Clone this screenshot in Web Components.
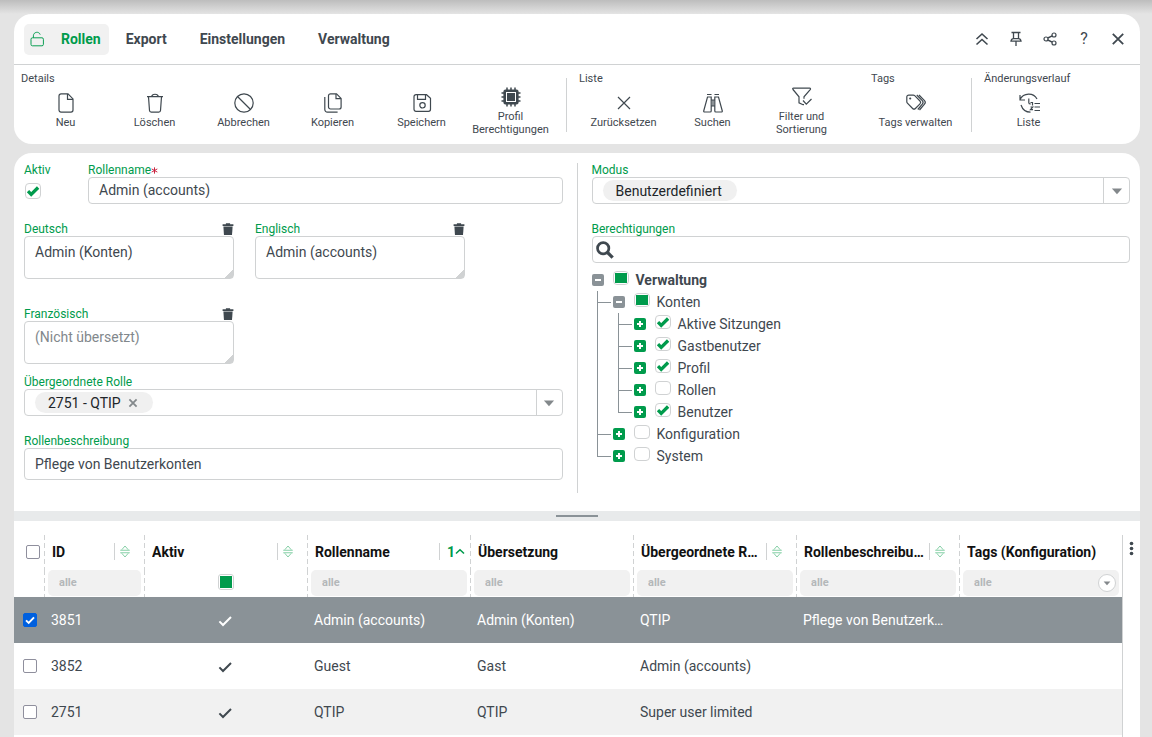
<!DOCTYPE html>
<html lang="de">
<head>
<meta charset="utf-8">
<meta name="viewport" content="width=device-width, initial-scale=1">
<title>Rollen</title>
<style>
html, body { height: 100%; }
body {
  margin: 0;
  overflow: hidden;
  font: 14px/20px Roboto, sans-serif;
  color: #3f484f;
  background: linear-gradient(#bdbdbd, #e4e4e4 14px) #e4e4e4;
  background-repeat: no-repeat;
  --green: #009b4c;
  --line: #d0d2d3;
  --ink: #3f484f;
  --slate: #8a9297;
}
</style>
</head>
<body>
<role-app></role-app>

<script>
const ICONS = {
  unlock: '<rect x="2.500" y="8.500" width="15.500" height="10" rx="1.800"/><path d="M5.500 8.500V6C5.500 1 12.500 0 14 4.500"/>',
  page: '<path d="M5 .9h7l5 5v11.2a2 2 0 0 1-2 2H5a2 2 0 0 1-2-2V2.900a2 2 0 0 1 2-2z"/><path d="M11.500 1v5.300H17"/>',
  trash: '<path d="M2 3.600h16M6.800 3.400C7 .5 13 .5 13.200 3.400M3.500 3.800l1 13.700a1.700 1.700 0 0 0 1.700 1.600h7.600a1.700 1.700 0 0 0 1.700-1.600l1-13.700"/>',
  ban: '<circle cx="10" cy="10" r="9.200"/><path d="M3.500 3.500l13 13"/>',
  copy: '<path d="M7.500 .8h6l4.600 4.600v8.600a2 2 0 0 1-2 2H7.500a2 2 0 0 1-2-2V2.800a2 2 0 0 1 2-2z"/><path d="M13 1v4.700h5M1.800 4v12.500a2.600 2.600 0 0 0 2.600 2.600h10.200"/>',
  save: '<path d="M4 1.700h10.500l4 3.600v11a2 2 0 0 1-2 2H4a2 2 0 0 1-2-2V3.700a2 2 0 0 1 2-2z"/><path d="M5.500 2v4.300h8V2"/><circle cx="10.500" cy="12.300" r="2.700"/>',
  chip: '<path d="M6 .5v19M10 .5v19M14 .5v19M.5 6h19M.5 10h19M.5 14h19" stroke-width="1.500"/><rect x="3" y="3" width="14" height="14" rx="1.500" fill="currentColor"/><rect x="5.500" y="5.500" width="9" height="9" stroke="#fff" stroke-width="1" fill="currentColor"/>',
  cross: '<path d="M4 4l12 12M16 4L4 16"/>',
  search2: '<path d="M4 1.500h4.500M11.500 1.500H16M4.500 4h3.700V18a1 1 0 0 1-1 1H1.500a.8.8 0 0 1-.8-1zM15.500 4h-3.700V18a1 1 0 0 0 1 1h5.700a.8.8 0 0 0 .8-1zM8.300 7h3.400M8.300 13h3.400M10 7v6"/>',
  filter: '<path d="M1 2.500C.4 1.600.6 1.200 1.600 1.200H17.600c1 0 1.200.6.6 1.400L12 9.800v2M1 2.500l6 7.300v6l4 1.900h1"/><path d="M11 13.500l3.300 3.700 5.200-5.200"/>',
  tags: '<path d="M.8 4a1.900 1.900 0 0 1 1.900-1.900h4.600a2 2 0 0 1 1.400.6l5.300 5.300a2 2 0 0 1 0 2.800l-4.600 4.700a2 2 0 0 1-2.800 0L1.400 10.200a2 2 0 0 1-.6-1.400z"/><path d="M10.800 2l5.500 5.700a2.600 2.600 0 0 1 0 3.500L11.800 16.500M13 2l5.500 5.700a2.600 2.600 0 0 1 0 3.500L13.500 17"/><circle cx="4.200" cy="5.500" r=".5"/>',
  history: '<path d="M1 6.500C4.500-.5 14.500-.8 18 6M1 2v5h5M2 12c2 6 5.500 7.200 9.500 7.200M9.800 5.500v4.200c0 1 .8 1.300 2 1.300M11.500 9.500h2v3M11.500 14h2.300l-2.300 2.700h2.500M15.500 10.500H21M15.500 14H21M15.500 17.500H21"/>',
  up2: '<path d="M4.500 10L10 5l5.500 5M4.500 15.500l5.500-5 5.500 5" stroke-width="1.600"/>',
  pin: '<path d="M5.500 3.500h9M7.500 3.500v6.200h5V3.500M5 12.200c.3-1.800 1.300-2.500 2.500-2.500h5c1.200 0 2.200.7 2.500 2.500zM10 12.500V17" stroke-width="1.300"/>',
  share: '<circle cx="6" cy="10" r="2"/><circle cx="14" cy="6" r="2"/><circle cx="14" cy="14" r="2"/><path d="M7.800 9l4.400-2.100M7.800 11l4.400 2.100" stroke-width="1.500"/>',
  close: '<path d="M4.800 4.800l10.400 10.400M15.200 4.800L4.800 15.200" stroke-width="1.800"/>',
  bin: '<path d="M6.500 2.200V.5h7v1.700H19v3H1v-3z" fill="currentColor" stroke="none"/><path d="M2.300 6h15.400l-1 14H3.300z" fill="currentColor" stroke="none"/>',
  star: '<path d="M10 1v18M2 5.500l16 9M18 5.500l-16 9" stroke-width="2.800"/>',
  small: '<path d="M4 4l12 12M16 4L4 16" stroke-width="3"/>',
  down: '<path d="M1.500 6h17L10 15.500z" fill="currentColor" stroke="none"/>',
  lens: '<circle cx="8" cy="8" r="6.300" stroke-width="3"/><path d="M12.500 12.500l6 6" stroke-width="3.600"/>',
  sort: '<path d="M3.500 9.500L10 2l6.500 7.500M.500 10.500h19M.500 15.500h19M3.500 16.500L10 24l6.500-7.500" stroke-width="2"/>',
  asc: '<path d="M2 14L10 6.500l8 7.500" stroke-width="3.200"/>',
  tick: '<path d="M3 10.500l4.500 4.500L17.500 5" stroke-width="2.500"/>',
  dots: '<g fill="currentColor" stroke="none"><circle cx="10" cy="4" r="2.900"/><circle cx="10" cy="12" r="2.900"/><circle cx="10" cy="20" r="2.900"/></g>'
};
const HEIGHTS = { dots: 24, sort: 26 };

const BASE = `
  *, *::before, *::after { box-sizing: border-box; }
  button, input, textarea, select { font: inherit; color: inherit; margin: 0; }
  button { border: 0; padding: 0; background: none; cursor: pointer; }
`;
/* green tick shared by the form and the tree */
const TICK = `
  input[type=checkbox] {
    appearance: none; width: 16px; height: 16px; flex: none;
    border: 1px solid var(--line); border-radius: 4px; background: #fff center/14px 14px no-repeat;
  }
  input[type=checkbox]:checked {
    background-image: url("data:image/svg+xml,%3Csvg xmlns='http://www.w3.org/2000/svg' viewBox='0 0 14 14'%3E%3Cpath d='M2 7.200l3.200 3.200 6.900-6.900' fill='none' stroke='%23009b4c' stroke-width='3.300'/%3E%3C/svg%3E");
  }
  input[type=checkbox].mixed { background: linear-gradient(var(--green), var(--green)) center/12px 10px no-repeat #fff; }
`;

function define(name, css, html) {
  customElements.define(name, class extends HTMLElement {
    connectedCallback() {
      if (this.shadowRoot) return;
      const root = this.attachShadow({ mode: 'open' });
      const a = (k, d = '') => this.getAttribute(k) ?? d;
      root.innerHTML = `<style>${BASE}${css}</style>` + (typeof html === 'function' ? html(a) : html);
    }
  });
}

define('ui-icon', `
  :host { display: inline-flex; width: 20px; height: 20px; flex: none; }
  svg { width: 100%; height: 100%; overflow: visible; fill: none; stroke: currentColor; stroke-width: 1.200; }
`, a => `<svg viewBox="0 0 20 ${HEIGHTS[a('name')] || 20}" aria-hidden="true">${ICONS[a('name')]}</svg>`);

define('tool-button', `
  :host { display: flex; width: 89px; align-items: center; justify-content: center; }
  button { display: flex; flex-direction: column; align-items: center; gap: 3px; width: 100%;
    font-size: 11px; line-height: 13px; }
  span { max-width: 84px; }
`, a => `<button type="button"><ui-icon name="${a('icon')}"></ui-icon><span><slot></slot></span></button>`);

define('tool-group', `
  :host { display: flex; flex-direction: column; }
  h2 { margin: 0; font-size: 11px; font-weight: 400; line-height: 14px; white-space: nowrap; }
  div { display: flex; height: 50px; }
`, a => `<h2>${a('label')}</h2><div><slot></slot></div>`);

define('app-ribbon', `
  :host { display: block; background: #fff; border-radius: 18px; color: var(--ink); }
  header { display: flex; align-items: center; justify-content: space-between; height: 51px;
    padding: 0 5px 0 10px; border-bottom: 1px solid var(--line); }
  nav { display: flex; align-items: center; gap: 33px; }
  a { color: inherit; text-decoration: none; font-weight: 700; font-size: 14px; line-height: 31px; white-space: nowrap; }
  a[aria-current] { display: flex; align-items: center; gap: 16px; padding: 0 8px 0 5px; margin-right: -16px;
    color: var(--green); background: #f1f1f1; border-radius: 5px; }
  a ui-icon { width: 16px; height: 16px; }
  .actions { display: flex; }
  .actions button { display: flex; justify-content: center; align-items: center; width: 34px; height: 34px; font-size: 16px; }
  .tools { display: flex; padding: 7px 7px 8px; height: 79px; }
  hr { width: 1px; height: 54px; margin: 6px 12px 0 11px; border: 0; background: var(--line); }
  .gap { margin-left: 25px; }
`, `
  <header>
    <nav>
      <a href="#rollen" aria-current="page"><ui-icon name="unlock"></ui-icon>Rollen</a>
      <a href="#export">Export</a><a href="#einstellungen">Einstellungen</a><a href="#verwaltung">Verwaltung</a>
    </nav>
    <div class="actions">
      <button aria-label="Einklappen"><ui-icon name="up2"></ui-icon></button>
      <button aria-label="Anheften"><ui-icon name="pin"></ui-icon></button>
      <button aria-label="Teilen"><ui-icon name="share"></ui-icon></button>
      <button aria-label="Hilfe">?</button>
      <button aria-label="Schließen"><ui-icon name="close"></ui-icon></button>
    </div>
  </header>
  <div class="tools">
    <tool-group label="Details">
      <tool-button icon="page">Neu</tool-button>
      <tool-button icon="trash">Löschen</tool-button>
      <tool-button icon="ban">Abbrechen</tool-button>
      <tool-button icon="copy">Kopieren</tool-button>
      <tool-button icon="save">Speichern</tool-button>
      <tool-button icon="chip">Profil Berechtigungen</tool-button>
    </tool-group>
    <hr>
    <tool-group label="Liste">
      <tool-button icon="cross">Zurücksetzen</tool-button>
      <tool-button icon="search2">Suchen</tool-button>
      <tool-button icon="filter">Filter und Sortierung</tool-button>
    </tool-group>
    <tool-group class="gap" label="Tags"><tool-button icon="tags">Tags verwalten</tool-button></tool-group>
    <hr>
    <tool-group label="Änderungsverlauf"><tool-button icon="history">Liste</tool-button></tool-group>
  </div>
`);

const FIELD = `
  :host { display: block; min-width: 0; }
  .head { display: flex; align-items: center; justify-content: space-between; height: 14px; }
  label { color: var(--green); font-size: 12px; line-height: 14px; white-space: nowrap; }
  .box { display: flex; width: 100%; height: 27px; border: 1px solid var(--line); border-radius: 4px; background: #fff; }
`;

define('text-field', FIELD + `
  label ui-icon { width: 7px; height: 7px; color: #c8203c; }
  input { padding: 0 10px 2px; outline: 0; }
  :host([tall]) .box { height: 32px; padding-bottom: 0; }
`, a => `<div class="head"><label for="f">${a('label')}${a('required', null) !== null ? '<ui-icon name="star"></ui-icon>' : ''}</label></div>
  <input class="box" id="f" type="text" value="${a('value')}">`);

define('area-field', FIELD + `
  :host { width: 210px; }
  button { display: flex; }
  button ui-icon { width: 12px; height: 12px; }
  textarea.box { display: block; height: 43px; padding: 5px 10px; resize: none; outline: 0; overflow: hidden;
    background: linear-gradient(135deg, transparent 50%, #d0d2d3 50%) right bottom/8px 8px no-repeat #fff; }
  textarea::placeholder { color: #82888c; opacity: 1; }
`, a => `<div class="head"><label for="f">${a('label')}</label><button aria-label="${a('label')} löschen"><ui-icon name="bin"></ui-icon></button></div>
  <textarea class="box" id="f" placeholder="${a('placeholder')}">${a('value')}</textarea>`);

define('check-field', FIELD + TICK + `
  :host { width: 64px; }
  input[type=checkbox] { display: block; margin: 6px 0 0 1px; }
`, a => `<div class="head"><label for="f">${a('label')}</label></div><input id="f" type="checkbox" checked>`);

define('chip-select', FIELD + `
  .box { align-items: center; padding-left: 10px; }
  .chip { display: flex; align-items: center; gap: 6px; height: 21px; padding: 0 14px 0 13px; border-radius: 11px; background: #f0f0f0; color: #212529; }
  select { appearance: none; border: 0; padding: 0; background: none; line-height: 20px; outline: 0; }
  .chip button { display: flex; color: #83888b; }
  .chip ui-icon { width: 12px; height: 12px; }
  .arrow { display: flex; align-items: center; justify-content: center; width: 26px; height: 25px; margin-left: auto;
    border-left: 1px solid var(--line); color: #83888b; }
  .arrow ui-icon { width: 12px; height: 12px; }
`, a => `<div class="head"><label for="f">${a('label')}</label></div>
  <div class="box"><span class="chip"><select id="f"><option>${a('value')}</option></select>${a('clearable', null) !== null ? '<button aria-label="Entfernen"><ui-icon name="small"></ui-icon></button>' : ''}</span>
  <button class="arrow" aria-label="Öffnen"><ui-icon name="down"></ui-icon></button></div>`);

define('search-field', FIELD + `
  .box { align-items: center; padding-left: 3px; }
  .box ui-icon { width: 18px; height: 18px; }
  input { flex: 1; min-width: 0; border: 0; outline: 0; background: none; }
`, a => `<div class="head"><label for="f">${a('label')}</label></div>
  <div class="box"><ui-icon name="lens"></ui-icon><input id="f" type="search"></div>`);

define('tree-node', TICK + `
  :host { display: block; }
  :host([slot=child]) {
    padding-left: 21px;
    background: linear-gradient(#8a9297, #8a9297) 5px 0/1px 100% no-repeat,
                linear-gradient(#8a9297, #8a9297) 5px 11px/14px 1px no-repeat;
  }
  :host([last]) {
    background: linear-gradient(#8a9297, #8a9297) 5px 0/1px 11px no-repeat,
                linear-gradient(#8a9297, #8a9297) 5px 11px/14px 1px no-repeat;
  }
  .row { display: flex; align-items: center; height: 22px; }
  .toggle { width: 12px; height: 12px; flex: none; border-radius: 2px; margin-right: 9px;
    background: linear-gradient(#fff, #fff) center/6px 2px no-repeat, linear-gradient(#fff, #fff) center/2px 6px no-repeat, var(--green); }
  .toggle[aria-expanded=true] { background: linear-gradient(#fff, #fff) center/6px 2px no-repeat, var(--slate); }
  input[type=checkbox] { height: 14px; margin: 0 7px 4px 0; background-size: 14px 14px; }
  input[type=checkbox].mixed { background-size: 12px 10px; }
  label { white-space: nowrap; }
  :host([strong]) label { font-weight: 700; }
`, a => `<div class="row"><button class="toggle" aria-label="Umschalten" aria-expanded="${a('open', null) !== null}"></button>
  <input id="c" type="checkbox" ${a('state') === 'on' ? 'checked' : ''} class="${a('state')}"><label for="c">${a('label')}</label></div><slot name="child"></slot>`);

define('role-form', `
  :host { display: grid; grid-template-columns: minmax(0, 1fr) 1px minmax(0, 1fr); gap: 14px; padding: 10px 10px 18px; color: var(--ink); }
  .line { background: var(--line); }
  .left { padding-bottom: 13px; }
  .pair { display: flex; margin-bottom: 18px; }
  .pair text-field { flex: 1; }
  .areas { display: flex; flex-wrap: wrap; gap: 28px 21px; margin-bottom: 11px; }
  chip-select { margin-bottom: 18px; }
  .tree { margin-top: 6px; }
  .areas area-field { flex: 0 0 210px; }
`, `
  <section class="left">
    <div class="pair"><check-field label="Aktiv"></check-field><text-field label="Rollenname" required value="Admin (accounts)"></text-field></div>
    <div class="areas">
      <area-field label="Deutsch" value="Admin (Konten)"></area-field>
      <area-field label="Englisch" value="Admin (accounts)"></area-field>
      <area-field label="Französisch" placeholder="(Nicht übersetzt)"></area-field>
    </div>
    <chip-select label="Übergeordnete Rolle" value="2751 - QTIP" clearable></chip-select>
    <text-field tall label="Rollenbeschreibung" value="Pflege von Benutzerkonten"></text-field>
  </section>
  <div class="line"></div>
  <section>
    <chip-select label="Modus" value="Benutzerdefiniert"></chip-select>
    <search-field label="Berechtigungen"></search-field>
    <div class="tree">
      <tree-node label="Verwaltung" strong open state="mixed">
        <tree-node slot="child" label="Konten" open state="mixed">
          <tree-node slot="child" label="Aktive Sitzungen" state="on"></tree-node>
          <tree-node slot="child" label="Gastbenutzer" state="on"></tree-node>
          <tree-node slot="child" label="Profil" state="on"></tree-node>
          <tree-node slot="child" label="Rollen"></tree-node>
          <tree-node slot="child" label="Benutzer" state="on" last></tree-node>
        </tree-node>
        <tree-node slot="child" label="Konfiguration"></tree-node>
        <tree-node slot="child" label="System" last></tree-node>
      </tree-node>
    </div>
  </section>
`);

define('split-bar', `
  :host { display: flex; justify-content: center; align-items: center; height: 10px; background: #e8eaeb; }
  span { width: 42px; height: 2px; background: var(--slate); }
`, `<span></span>`);

const COLS = [
  ['ID', 'sort', 'text'], ['Aktiv', 'sort', 'check'], ['Rollenname', 'asc', 'text'], ['Übersetzung', '', 'text'],
  ['Übergeordnete Rolle', 'sort', 'text'], ['Rollenbeschreibung', 'sort', 'text'], ['Tags (Konfiguration)', '', 'menu']
];
const ROWS = [
  ['3851', true, 'Admin (accounts)', 'Admin (Konten)', 'QTIP', 'Pflege von Benutzerkonten', ''],
  ['3852', true, 'Guest', 'Gast', 'Admin (accounts)', '', ''],
  ['2751', true, 'QTIP', 'QTIP', 'Super user limited', '', '']
];

define('role-grid', `
  :host { display: flex; flex: 1; padding-top: 14px; color: var(--ink); }
  .scroll { flex: 1; min-width: 0; }
  .side { width: 18px; border-left: 1px solid var(--line); text-align: center; padding-top: 6px; color: var(--ink); }
  .side ui-icon { width: 13px; height: 15px; }
  table { width: 100%; table-layout: fixed; border-collapse: separate; border-spacing: 0; }
  .pick { width: 30px; } .id { width: 100px; }
  th, td { padding: 0; text-align: left; overflow: hidden; white-space: nowrap; text-overflow: ellipsis; }
  thead th + th, thead td + td { background: repeating-linear-gradient(var(--line) 0 5px, transparent 5px 8px) 0 0/1px 100% no-repeat; }
  thead tr:first-child { height: 35px; }
  thead tr:last-child { height: 27px; }
  thead th { padding-bottom: 2px; color: #111; font-weight: 700; vertical-align: middle; }
  .title { display: flex; align-items: center; padding: 0 14px 0 8px; height: 20px; }
  .title.sorted { padding-right: 5px; }
  .title span { flex: 1; min-width: 0; margin-right: 4px; overflow: hidden; text-overflow: ellipsis; }
  .title button { display: flex; align-items: center; justify-content: flex-end; width: 16px; height: 17px; border-left: 1px solid var(--line); color: #86d0a7; }
  .title.sorted button { width: 26px; color: var(--green); font-weight: 700; }
  .title ui-icon { width: 10px; height: 13px; }
  .filter { display: flex; align-items: center; height: 26px; margin: 0 3px 1px 4px; border-radius: 5px; background: #f1f1f1; }
  .filter input { width: 100%; min-width: 0; padding: 0 11px; border: 0; outline: 0; background: none; font-size: 11px; font-weight: 700; }
  .filter input::placeholder { color: #b4b7b9; opacity: 1; }
  .filter button { display: flex; align-items: center; justify-content: center; flex: none; width: 18px; height: 18px; margin-right: 3px;
    border: 1px solid var(--line); border-radius: 50%; background: #fff; color: #83888b; }
  .filter ui-icon { width: 8px; height: 8px; }
  .center { text-align: center; }
  .mixed { display: block; appearance: none; width: 16px; height: 16px; margin: 0 auto 4px; border: 1px solid var(--line); border-radius: 3px;
    background: linear-gradient(var(--green), var(--green)) center/12px 12px no-repeat #fff; }
  .select { display: block; appearance: none; width: 14px; height: 14px; margin: 0 0 0 9px; border: 1px solid #8f8f9d; border-radius: 2px; background: #fff; }
  thead .select { margin-left: 12px; }
  .select:checked { border-color: #0060df;
    background: url("data:image/svg+xml,%3Csvg xmlns='http://www.w3.org/2000/svg' viewBox='0 0 12 12'%3E%3Cpath d='M2 6.300l2.700 2.700L10 3.300' fill='none' stroke='white' stroke-width='1.900'/%3E%3C/svg%3E") #0060df; }
  tbody tr { height: 46px; }
  tbody td { padding: 0 9px 0 7px; }
  tbody td:first-child, tbody td.center { padding: 0; }
  tbody tr:nth-child(odd) { background: #f1f1f1; }
  tbody tr.current { background: #8a9297; color: #fff; }
  tbody td.center { padding-right: 2px; }
  tbody ui-icon { width: 16px; height: 16px; vertical-align: middle; }
`, () => `
  <div class="scroll"><table>
    <colgroup><col class="pick"><col class="id"><col><col><col><col><col><col></colgroup>
    <thead>
      <tr><th><input class="select" type="checkbox" aria-label="Alle auswählen"></th>${COLS.map(([t, s]) => `<th scope="col"><div class="title ${s === 'asc' ? 'sorted' : ''}"><span>${t}</span>${s ? `<button aria-label="Sortieren">${s === 'asc' ? '1' : ''}<ui-icon name="${s}"></ui-icon></button>` : ''}</div></th>`).join('')}</tr>
      <tr><td></td>${COLS.map(([t, , f]) => f === 'check'
        ? `<td><input class="mixed" type="checkbox" aria-label="${t} filtern"></td>`
        : `<td><div class="filter"><input type="text" placeholder="alle" aria-label="${t} filtern">${f === 'menu' ? '<button aria-label="Auswahl"><ui-icon name="down"></ui-icon></button>' : ''}</div></td>`).join('')}</tr>
    </thead>
    <tbody>${ROWS.map((r, i) => `<tr class="${i ? '' : 'current'}"><td><input class="select" type="checkbox" aria-label="${r[0]} auswählen" ${i ? '' : 'checked'}></td>${r.map(v => v === true ? '<td class="center"><ui-icon name="tick"></ui-icon></td>' : `<td>${v}</td>`).join('')}</tr>`).join('')}</tbody>
  </table></div>
  <div class="side"><button aria-label="Spalten"><ui-icon name="dots"></ui-icon></button></div>
`);

define('role-app', `
  :host { display: flex; flex-direction: column; gap: 9px; height: 100%; padding: 14px 12px 0 14px; box-sizing: border-box; }
  main { display: flex; flex-direction: column; flex: 1; min-height: 0; background: #fff; border-radius: 18px 18px 0 0; }
`, `<app-ribbon></app-ribbon><main><role-form></role-form><split-bar></split-bar><role-grid></role-grid></main>`);
</script>
</body>
</html>
